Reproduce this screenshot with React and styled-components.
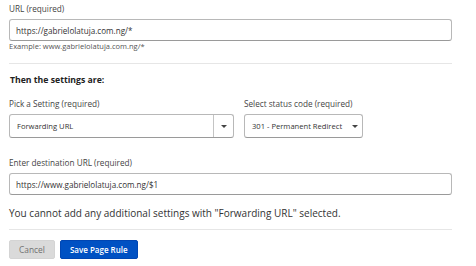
import React from "react";
import styled, { createGlobalStyle } from "styled-components";

const GlobalStyle = createGlobalStyle`
  html, body {
    margin: 0;
    padding: 0;
    background: #ffffff;
  }
  body {
    font-family: "Open Sans", "Noto Sans", sans-serif;
    color: #333;
  }
`;

const Form = styled.div`
  width: 460px;
  padding: 4px 8px 0 9px;
  box-sizing: border-box;
`;

const Field = styled.div`
  display: flex;
  flex-direction: column;
  margin-top: ${(p) => p.$top || 0}px;
`;

const Label = styled.label`
  font-size: 8.2px;
  line-height: 10px;
  color: #444;
  margin-bottom: 5px;
  white-space: nowrap;
`;

const TextInput = styled.div`
  height: 22px;
  box-sizing: border-box;
  border: 1px solid #b8b8b8;
  border-bottom-color: #9a9a9a;
  border-radius: 3px;
  display: flex;
  align-items: center;
  padding: 0 6px;
  font-size: 8.1px;
  color: #333;
`;

const Hint = styled.div`
  font-size: 7.5px;
  line-height: 10px;
  color: #555;
`;

const Divider = styled.hr`
  border: none;
  border-top: 1px solid #e6e6e6;
  margin: ${(p) => p.$top}px 0 0 0;
`;

const Heading = styled.h3`
  margin: 11px 0 0 1px;
  font-size: 8.7px;
  line-height: 11px;
  font-weight: 700;
  color: #222;
`;

const Row = styled.div`
  display: flex;
  gap: 10px;
  margin-top: ${(p) => p.$top}px;
`;

const SelectBox = styled.div`
  width: ${(p) => p.$w}px;
  height: 24px;
  box-sizing: border-box;
  border: 1px solid #b8b8b8;
  border-bottom-color: #9a9a9a;
  border-radius: 3px;
  display: flex;
  align-items: center;
  font-size: 7.6px;
  color: #333;
  white-space: nowrap;
`;

const SelectText = styled.span`
  flex: 1;
  padding: 0 0 0 7px;
  overflow: hidden;
`;

const ArrowCell = styled.span`
  width: ${(p) => (p.$split ? 19 : 14)}px;
  flex-shrink: 0;
  height: 100%;
  border-left: ${(p) => (p.$split ? "1px solid #c4c4c4" : "none")};
  display: flex;
  align-items: center;
  justify-content: center;
`;

const Caret = styled.span`
  width: 0;
  height: 0;
  border-left: 3px solid transparent;
  border-right: 3px solid transparent;
  border-top: 3px solid #444;
`;

const Message = styled.p`
  margin: 12px 0 0;
  font-size: 10px;
  line-height: 13px;
  color: #333;
  white-space: nowrap;
`;

const Actions = styled.div`
  display: flex;
  gap: 5px;
  margin-top: 10px;
`;

const Button = styled.button`
  height: 19px;
  box-sizing: border-box;
  border-radius: 2px;
  font-family: inherit;
  font-size: ${(p) => (p.$primary ? 8 : 8.4)}px;
  padding: 0 9px;
  border: 1px solid ${(p) => (p.$primary ? "#0046b3" : "#d4d4d4")};
  background: ${(p) => (p.$primary ? "#0051c3" : "#dadada")};
  color: ${(p) => (p.$primary ? "#fff" : "#707070")};
  font-weight: ${(p) => (p.$primary ? 600 : 400)};
`;

const Select = ({ width, value, split }) => (
  <SelectBox $w={width}>
    <SelectText>{value}</SelectText>
    <ArrowCell $split={split}>
      <Caret />
    </ArrowCell>
  </SelectBox>
);

export default function App() {
  return (
    <>
      <GlobalStyle />
      <Form>
        <Field>
          <Label>URL (required)</Label>
          <TextInput>https://gabrielolatuja.com.ng/*</TextInput>
          <Hint>Example: www.gabrielolatuja.com.ng/*</Hint>
        </Field>
        <Divider $top={12} />
        <Heading>Then the settings are:</Heading>
        <Row $top={13}>
          <Field>
            <Label>Pick a Setting (required)</Label>
            <Select width={225} value="Forwarding URL" split />
          </Field>
          <Field>
            <Label>Select status code (required)</Label>
            <Select width={119} value="301 - Permanent Redirect" />
          </Field>
        </Row>
        <Field $top={20}>
          <Label>Enter destination URL (required)</Label>
          <TextInput>https://www.gabrielolatuja.com.ng/$1</TextInput>
        </Field>
        <Message>
          You cannot add any additional settings with "Forwarding URL"
          selected.
        </Message>
        <Divider $top={9} />
        <Actions>
          <Button>Cancel</Button>
          <Button $primary>Save Page Rule</Button>
        </Actions>
      </Form>
    </>
  );
}
